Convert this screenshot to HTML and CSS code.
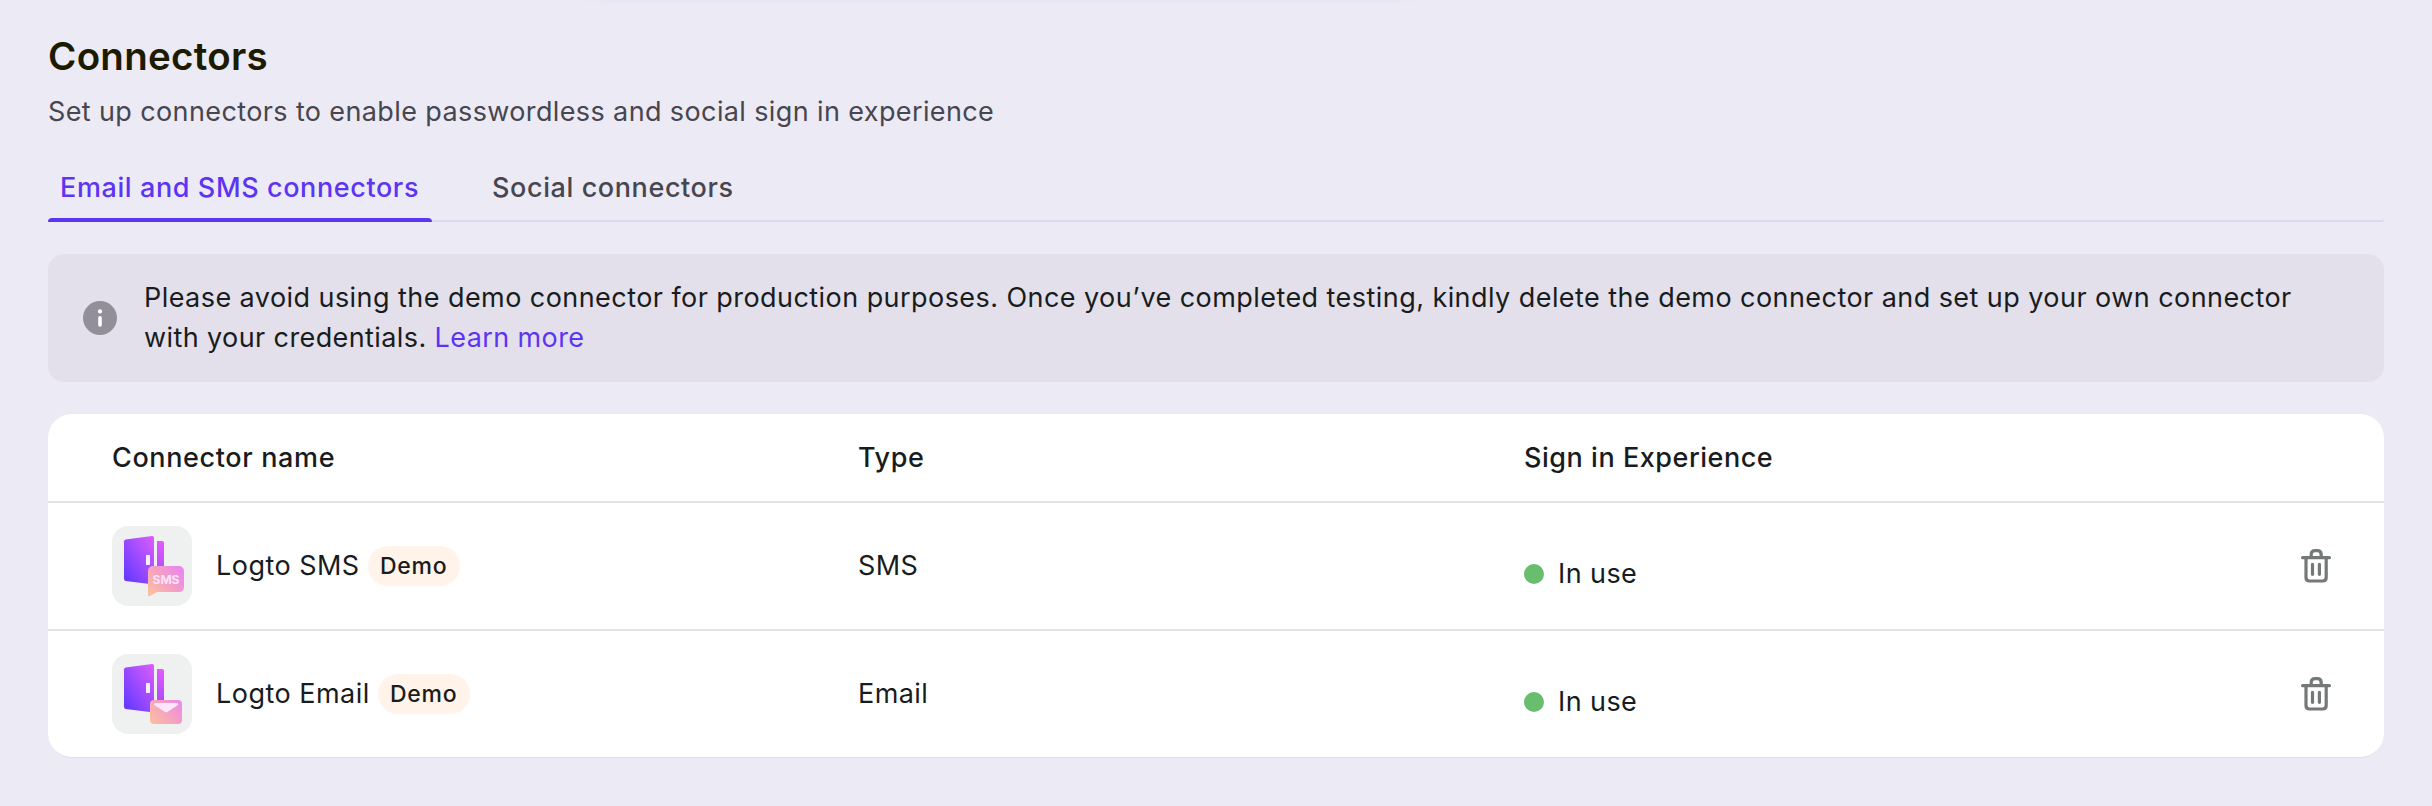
FILE: index.html
```html
<!DOCTYPE html>
<html lang="en">
<head>
<meta charset="utf-8">
<title>Connectors</title>
<link rel="stylesheet" href="styles.css">
</head>
<body>
<svg class="defs" width="0" height="0" aria-hidden="true">
  <defs>
    <linearGradient id="door" gradientUnits="userSpaceOnUse" x1="10" y1="44" x2="46" y2="20">
      <stop offset="0" stop-color="#6a3cff"/><stop offset="1" stop-color="#d85cff"/>
    </linearGradient>
    <linearGradient id="frame" gradientUnits="userSpaceOnUse" x1="52" y1="15" x2="45" y2="58">
      <stop offset="0" stop-color="#e05cff"/><stop offset="1" stop-color="#a044f8"/>
    </linearGradient>
    <linearGradient id="tag" gradientUnits="userSpaceOnUse" x1="36" y1="70" x2="68" y2="42">
      <stop offset="0" stop-color="#fcc39c"/><stop offset="0.5" stop-color="#f5a3bd"/><stop offset="1" stop-color="#ea86ee"/>
    </linearGradient>
    <symbol id="door-shape" viewBox="0 0 80 80">
      <path fill="url(#door)" d="M13.6 13.4 40 10.1Q42 9.9 42 11.8V58.6L13.6 55Q12 54.7 12 53V15.3Q12 13.7 13.6 13.4Z"/>
      <path fill="url(#frame)" d="M45 15H50.2Q52 15 52 16.8V58H45Z"/>
      <rect x="34" y="29" width="4" height="10" rx=".7" fill="#f6effc"/>
    </symbol>
    <symbol id="trash" viewBox="0 0 40 40">
      <g fill="none" stroke="#747878" stroke-width="3.2" stroke-linecap="round" stroke-linejoin="round">
        <path d="M6.6 11.7H33.4M10 12V31.6Q10 35 13.4 35H26.8Q30.2 35 30.2 31.6V12M15.2 11V8.6Q15.2 4.7 19.1 4.7H21.3Q25.2 4.7 25.2 8.6V11M16.5 18.3V28.3M23.4 18.3V28.3"/>
      </g>
    </symbol>
  </defs>
</svg>
<main class="page">
  <h1 class="title">Connectors</h1>
  <p class="subtitle">Set up connectors to enable passwordless and social sign in experience</p>
  <nav class="tabs">
    <a class="tab tab-active">Email and SMS connectors</a>
    <a class="tab">Social connectors</a>
  </nav>
  <section class="notice">
    <svg class="notice-icon" viewBox="0 0 34 34"><circle cx="17" cy="17" r="17" fill="#928f9a"/><circle cx="17" cy="10.4" r="2.1" fill="#fff"/><path d="M17 16.7V24" stroke="#fff" stroke-width="3.6" stroke-linecap="round"/></svg>
    <p class="notice-text"><span class="line-one">Please avoid using the demo connector for production purposes. Once you’ve completed testing, kindly delete the demo connector and set up your own connector</span> <br>with your credentials. <a class="link">Learn more</a></p>
  </section>
  <section class="table">
    <div class="row head">
      <div>Connector name</div><div>Type</div><div class="head-exp">Sign in Experience</div><div></div>
    </div>
    <div class="row">
      <div class="name">
        <svg class="logo" viewBox="0 0 80 80"><use href="#door-shape"/><path fill="url(#tag)" d="M41.5 40H66.5Q72 40 72 45.5V60.5Q72 66 66.5 66H47Q44.5 66 42.5 67.2L38 70Q36 71.1 36 69V45.5Q36 40 41.5 40Z"/><text class="logo-text" x="54" y="58" text-anchor="middle" textLength="26.8">SMS</text></svg>
        <span class="label">Logto SMS</span><span class="badge">Demo</span>
      </div>
      <div>SMS</div>
      <div class="status"><i class="dot"></i>In use</div>
      <div class="action"><svg class="trash"><use href="#trash"/></svg></div>
    </div>
    <div class="row">
      <div class="name">
        <svg class="logo" viewBox="0 0 80 80"><use href="#door-shape"/><rect x="38" y="46" width="32" height="24" rx="4" fill="url(#tag)"/><path fill="#ffe6fc" d="M43.2 49H65.2Q66.6 49.2 66.2 50.6 66 51.2 65.3 51.6L55.4 58Q54.2 58.9 53 58L43 51.6Q42 51 42 50 42.2 49 43.2 49Z"/></svg>
        <span class="label">Logto Email</span><span class="badge">Demo</span>
      </div>
      <div>Email</div>
      <div class="status"><i class="dot"></i>In use</div>
      <div class="action"><svg class="trash"><use href="#trash"/></svg></div>
    </div>
  </section>
</main>
</body>
</html>
```
FILE: styles.css
```css
* { box-sizing: border-box; }
body {
  margin: 0;
  background: linear-gradient(90deg, #eceaf5, #e9e6f6 6%, #e9e6f6 94%, #eceaf5) 575px 0 / 850px 3px no-repeat #eceaf5;
  color: #191c1d;
  font: 400 27px/40px Inter, sans-serif;
  letter-spacing: .42px;
}
.defs { display: block; height: 0; }
.page { padding: 36px 48px 48px; }
.title {
  margin: 0 0 16px;
  color: #1c1b00;
  font-size: 38.5px;
  font-weight: 600;
  line-height: 40px;
  letter-spacing: .27px;
}
.subtitle { margin: 0; color: #47464e; letter-spacing: .38px; }
.tabs {
  display: flex;
  gap: 48px;
  height: 56px;
  margin: 34px 0 32px;
  border-radius: 2px;
  box-shadow: inset 0 -2px #dad7f4;
}
.tab {
  padding: 2px 12px 0;
  color: #47464e;
  font-weight: 500;
  letter-spacing: .6px;
  white-space: nowrap;
}
.tab-active {
  position: relative;
  width: 384px;
  color: #5d34f2;
}
.tab-active::after {
  content: "";
  position: absolute;
  left: 0;
  right: 0;
  bottom: 0;
  height: 4px;
  border-radius: 4px 4px 0 0;
  background: #5d34f2;
}
.notice {
  display: flex;
  align-items: center;
  gap: 27px;
  height: 128px;
  margin-bottom: 32px;
  padding: 0 35px;
  border-radius: 16px;
  background: #e3e0eb;
}
.notice-icon { flex: none; width: 34px; height: 34px; }
.notice-text { margin: 0; white-space: nowrap; letter-spacing: .4px; }
.line-one { letter-spacing: .44px; }
.link { color: #5d34f2; }
.table {
  border-radius: 24px;
  background: #fff;
  border-bottom: 1px solid #e0e0e8;
}
.row {
  display: grid;
  grid-template-columns: 746px 666px 1fr 160px;
  align-items: center;
  height: 128px;
  padding-left: 64px;
  border-bottom: 2px solid #e0e3e3;
}
.row:last-child { height: 126px; border-bottom: 0; }
.head { height: 89px; font-weight: 500; letter-spacing: .63px; }
.head-exp { letter-spacing: .53px; }
.name { display: flex; align-items: center; }
.label { margin: 0 8px 0 24px; letter-spacing: .47px; }
.logo {
  width: 80px;
  height: 80px;
  border-radius: 16px;
  background: #eff1f1;
}
.logo-text { font: 700 12px Inter, sans-serif; letter-spacing: 0; fill: #ffe3fa; }
.badge {
  width: 92px;
  height: 40px;
  border-radius: 20px;
  background: #fff3ea;
  font-size: 23px;
  font-weight: 500;
  letter-spacing: .75px;
  text-align: center;
}
.status { display: flex; align-items: center; gap: 14px; padding-top: 16px; }
.dot { width: 20px; height: 20px; border-radius: 50%; background: #68be6c; }
.action { display: flex; padding-left: 72px; }
.trash { width: 40px; height: 40px; }
```
